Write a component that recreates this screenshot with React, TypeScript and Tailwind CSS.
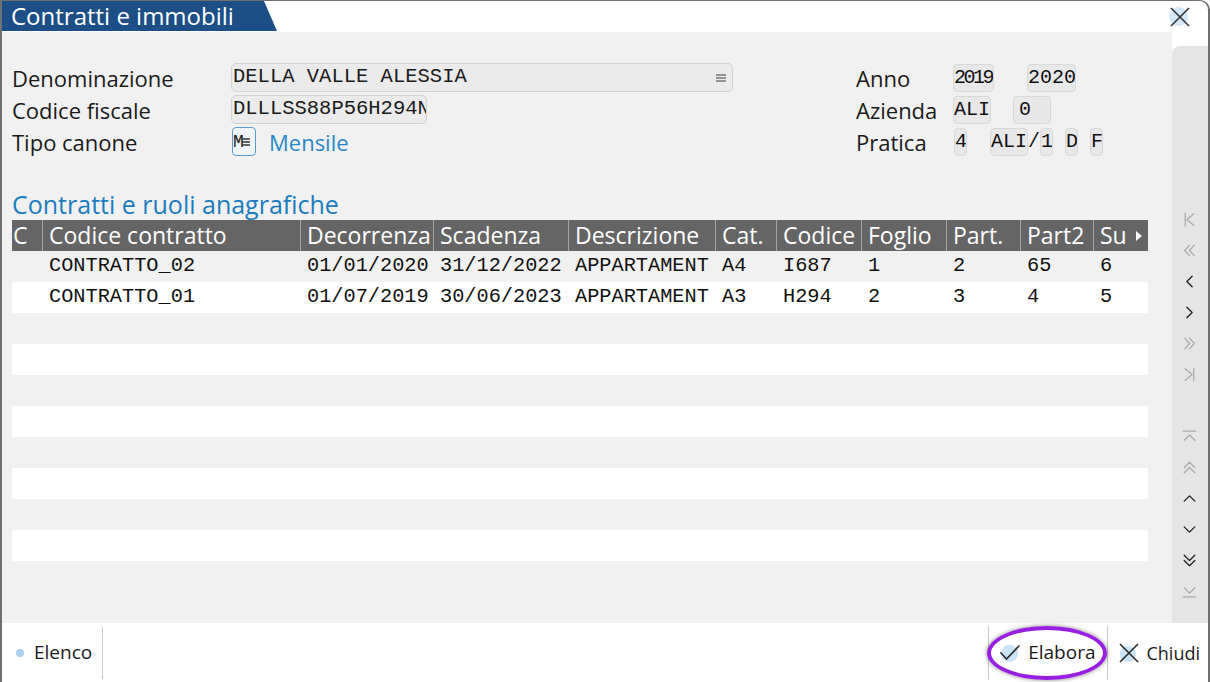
import React from 'react';

const sans = "font-['Open_Sans','Noto_Sans',sans-serif]";
const mono = "font-['Liberation_Mono','DejaVu_Sans_Mono',monospace]";

type NavKind =
  | 'first' | 'prev2' | 'prev' | 'next' | 'next2' | 'last'
  | 'top' | 'up2' | 'up' | 'down' | 'down2' | 'bottom' | 'none';

const navPaths: Record<NavKind, string> = {
  first: 'M4 2v12 M12 2.5L5.5 8l6.5 5.5',
  prev2: 'M8 3L3.5 8 8 13 M12.5 3L8 8l4.5 5',
  prev: 'M10.5 3L5.5 8l5 5',
  next: 'M5.5 3l5 5-5 5',
  next2: 'M3.5 3L8 8l-4.5 5 M8 3l4.5 5L8 13',
  last: 'M4 2.5L10.5 8 4 13.5 M12 2v12',
  top: 'M2 3h12 M3 11.5l5-5 5 5',
  up2: 'M3 8l5-5 5 5 M3 13l5-5 5 5',
  up: 'M3 10.5l5-5 5 5',
  down: 'M3 5.5l5 5 5-5',
  down2: 'M3 3l5 5 5-5 M3 8l5 5 5-5',
  bottom: 'M3 4.5l5 5 5-5 M2 13h12',
  none: '',
};

const navItems: { kind: NavKind; on: boolean }[] = [
  { kind: 'first', on: false },
  { kind: 'prev2', on: false },
  { kind: 'prev', on: true },
  { kind: 'next', on: true },
  { kind: 'next2', on: false },
  { kind: 'last', on: false },
  { kind: 'none', on: false },
  { kind: 'top', on: false },
  { kind: 'up2', on: false },
  { kind: 'up', on: true },
  { kind: 'down', on: true },
  { kind: 'down2', on: true },
  { kind: 'bottom', on: false },
];

const columns = [
  { label: 'C', w: 'w-[30px]', pad: 'pl-[1px]' },
  { label: 'Codice contratto', w: 'w-[258px]', pad: 'pl-[6px]' },
  { label: 'Decorrenza', w: 'w-[133px]', pad: 'pl-[6px]' },
  { label: 'Scadenza', w: 'w-[135px]', pad: 'pl-[6px]' },
  { label: 'Descrizione', w: 'w-[147px]', pad: 'pl-[6px]' },
  { label: 'Cat.', w: 'w-[61px]', pad: 'pl-[6px]' },
  { label: 'Codice', w: 'w-[85px]', pad: 'pl-[6px]' },
  { label: 'Foglio', w: 'w-[85px]', pad: 'pl-[6px]' },
  { label: 'Part.', w: 'w-[74px]', pad: 'pl-[6px]' },
  { label: 'Part2', w: 'w-[73px]', pad: 'pl-[6px]' },
  { label: 'Su', w: 'w-[55px]', pad: 'pl-[6px]' },
];

const rows: string[][] = [
  ['', 'CONTRATTO_02', '01/01/2020', '31/12/2022', 'APPARTAMENT', 'A4', 'I687', '1', '2', '65', '6'],
  ['', 'CONTRATTO_01', '01/07/2019', '30/06/2023', 'APPARTAMENT', 'A3', 'H294', '2', '3', '4', '5'],
  [], [], [], [], [], [], [], [],
];

function Box({ children, w }: { children?: React.ReactNode; w: string }) {
  return (
    <div className={`${w} h-[28px] bg-[#e8e8e8] border border-[#d9d9d9] rounded-[4px] flex items-center overflow-hidden ${mono} text-[20px] text-[#111] leading-none whitespace-nowrap`}>
      {children}
    </div>
  );
}

function NavIcon({ kind, on }: { kind: NavKind; on: boolean }) {
  return (
    <div className="h-[31px] flex items-center justify-center">
      {kind !== 'none' && (
        <svg width="17" height="17" viewBox="0 0 16 16" fill="none" stroke={on ? '#1e1e1e' : '#ababab'} strokeWidth="1.2" strokeLinecap="round" strokeLinejoin="round">
          <path d={navPaths[kind]} />
        </svg>
      )}
    </div>
  );
}

export default function App() {
  return (
    <div className={`w-[1210px] h-[682px] bg-white overflow-hidden ${sans}`}>
      <div className="h-full flex flex-col border-l-2 border-t border-r-2 border-[#707070] rounded-tr-[10px]">
        {/* title bar */}
        <div className="h-[31px] flex items-start justify-between">
          <div className="w-[275px] h-[30px] bg-[#1d4f86] text-white text-[24px] leading-[30px] pl-[9px] whitespace-nowrap [clip-path:polygon(0_0,262px_0,275px_100%,0_100%)]">
            Contratti e immobili
          </div>
          <div className="mr-[16px] mt-[4px] relative w-[24px] h-[24px]">
            <div className="absolute left-[1px] top-[2px] w-[19px] h-[19px] rounded-full bg-[#d3e8f8]" />
            <svg className="absolute inset-0" width="24" height="24" viewBox="0 0 24 24" fill="none" stroke="#333" strokeWidth="1.6">
              <path d="M3 3l18 18 M21 3L3 21" />
            </svg>
          </div>
        </div>

        <div className="flex flex-1 min-h-0">
          {/* main panel */}
          <div className="w-[1170px] bg-[#f1f1f1] pl-[10px] pt-[31px]">
            <div className="flex text-[22px] text-[#1a1a1a] leading-none">
              {/* left form */}
              <div className="w-[844px] flex flex-col gap-[3px]">
                <div className="h-[29px] flex items-center">
                  <span className="w-[219px]">Denominazione</span>
                  <div className={`w-[502px] h-[29px] bg-[#ebebeb] border border-[#d2d2d2] rounded-[5px] flex items-center justify-between pr-[6px] ${mono} text-[20.5px]`}>
                    <span className="pl-[1px]">DELLA VALLE ALESSIA</span>
                    <svg width="10" height="10" viewBox="0 0 10 10" stroke="#777" strokeWidth="1.5">
                      <path d="M0 2h10 M0 5h10 M0 8h10" />
                    </svg>
                  </div>
                </div>
                <div className="h-[29px] flex items-center">
                  <span className="w-[219px]">Codice fiscale</span>
                  <div className={`w-[196px] h-[29px] bg-[#ebebeb] border border-[#d2d2d2] rounded-[5px] flex items-center overflow-hidden ${mono} text-[20.5px]`}>
                    <span className="pl-[1px] whitespace-nowrap">DLLLSS88P56H294N</span>
                  </div>
                </div>
                <div className="h-[29px] flex items-center">
                  <span className="w-[220px]">Tipo canone</span>
                  <div className={`w-[24px] h-[29px] border-[1.5px] border-[#5b9ad3] rounded-[4px] bg-[#eef4fa] flex items-center ${mono} text-[18px] overflow-hidden`}>
                    <span className="tracking-[-2px]">M</span>
                    <svg width="8" height="10" viewBox="0 0 8 10" stroke="#333" strokeWidth="1.4">
                      <path d="M0 2h8 M0 5h8 M0 8h8" />
                    </svg>
                  </div>
                  <span className="ml-[13px] text-[#2b87c8]">Mensile</span>
                </div>
              </div>
              {/* right form */}
              <div className="flex flex-col gap-[3px]">
                <div className="h-[29px] flex items-center">
                  <span className="w-[97px]">Anno</span>
                  <Box w="w-[41px]"><span className="tracking-[-2.5px]">2019</span></Box>
                  <div className="w-[33px]" />
                  <Box w="w-[49px]">2020</Box>
                </div>
                <div className="h-[29px] flex items-center">
                  <span className="w-[97px]">Azienda</span>
                  <Box w="w-[38px]">ALI</Box>
                  <div className="w-[22px]" />
                  <Box w="w-[38px]"><span className="pl-[5px]">0</span></Box>
                </div>
                <div className="h-[29px] flex items-center">
                  <span className="w-[98px]">Pratica</span>
                  <Box w="w-[13px]">4</Box>
                  <div className="w-[23px]" />
                  <Box w="w-[38px]">ALI</Box>
                  <span className={`${mono} text-[20px] w-[12px]`}>/</span>
                  <Box w="w-[13px]">1</Box>
                  <div className="w-[12px]" />
                  <Box w="w-[13px]">D</Box>
                  <div className="w-[12px]" />
                  <Box w="w-[13px]">F</Box>
                </div>
              </div>
            </div>

            <div className="mt-[32px] h-[32px] text-[25px] leading-none text-[#1c7cc0] flex items-center">
              Contratti e ruoli anagrafiche
            </div>

            {/* table */}
            <div className="w-[1136px]">
              <div className="h-[31px] flex bg-[#656565] text-white text-[23px] leading-none">
                {columns.map((c, i) => (
                  <div key={c.label} className={`${c.w} ${c.pad} h-full flex items-center overflow-hidden whitespace-nowrap ${i > 0 ? 'border-l border-[#a3a3a3]' : ''} ${i === columns.length - 1 ? 'justify-between pr-[6px]' : ''}`}>
                    <span>{c.label}</span>
                    {i === columns.length - 1 && (
                      <svg width="6" height="10" viewBox="0 0 6 10" fill="#fff"><path d="M0 0l6 5-6 5z" /></svg>
                    )}
                  </div>
                ))}
              </div>
              {rows.map((r, ri) => (
                <div key={ri} className={`h-[31px] flex ${ri % 2 === 1 ? 'bg-white' : ''} ${mono} text-[20.3px] text-[#111] leading-none`}>
                  {columns.map((c, ci) => (
                    <div key={ci} className={`${c.w} ${c.pad} ${ci > 0 ? 'border-l border-transparent' : ''} h-full flex items-center overflow-hidden whitespace-nowrap`}>
                      {r[ci] ?? ''}
                    </div>
                  ))}
                </div>
              ))}
            </div>
          </div>

          {/* side navigation */}
          <div className="flex-1 pt-[14px]">
            <div className="h-full bg-[#e5e5e5] rounded-tl-[8px] pt-[158px] pr-[2px]">
              {navItems.map((n, i) => (
                <NavIcon key={i} kind={n.kind} on={n.on} />
              ))}
            </div>
          </div>
        </div>

        {/* bottom bar */}
        <div className="h-[59px] flex items-center justify-between text-[19px] text-[#1a1a1a] leading-none">
          <div className="flex items-center h-full">
            <div className="ml-[14px] w-[8px] h-[8px] rounded-full bg-[#a9d1ef]" />
            <span className="ml-[10px]">Elenco</span>
            <div className="ml-[10px] w-px h-[52px] bg-[#c9c9c9]" />
          </div>
          <div className="flex items-center h-full">
            <div className="w-px h-[54px] bg-[#c9c9c9]" />
            <div className="relative flex items-center h-full pl-[10px] pr-[12px]">
              <div className="absolute left-[-2px] top-[3px] w-[120px] h-[54px] rounded-[50%] border-[4px] border-[#981ee0] shadow-[0_0_4px_rgba(0,0,0,0.5)]" />
              <div className="relative w-[22px] h-[20px]">
                <div className="absolute left-[2px] top-[2px] w-[17px] h-[17px] rounded-full bg-[#c9e3f7]" />
                <svg className="absolute inset-0" width="22" height="20" viewBox="0 0 22 20" fill="none" stroke="#2a2a2a" strokeWidth="1.7" strokeLinecap="round" strokeLinejoin="round">
                  <path d="M2 10l5.5 6L20 3" />
                </svg>
              </div>
              <span className="ml-[7px]">Elabora</span>
            </div>
            <div className="w-px h-[54px] bg-[#c9c9c9]" />
            <div className="flex items-center h-full pl-[11px] pr-[8px]">
              <div className="relative w-[20px] h-[20px]">
                <div className="absolute left-[1px] top-[3px] w-[16px] h-[16px] rounded-full bg-[#c9e3f7]" />
                <svg className="absolute inset-0" width="20" height="20" viewBox="0 0 20 20" fill="none" stroke="#2a2a2a" strokeWidth="1.6">
                  <path d="M1 1l18 18 M19 1L1 19" />
                </svg>
              </div>
              <span className="ml-[7px] text-[18px]">Chiudi</span>
            </div>
          </div>
        </div>
      </div>
    </div>
  );
}
